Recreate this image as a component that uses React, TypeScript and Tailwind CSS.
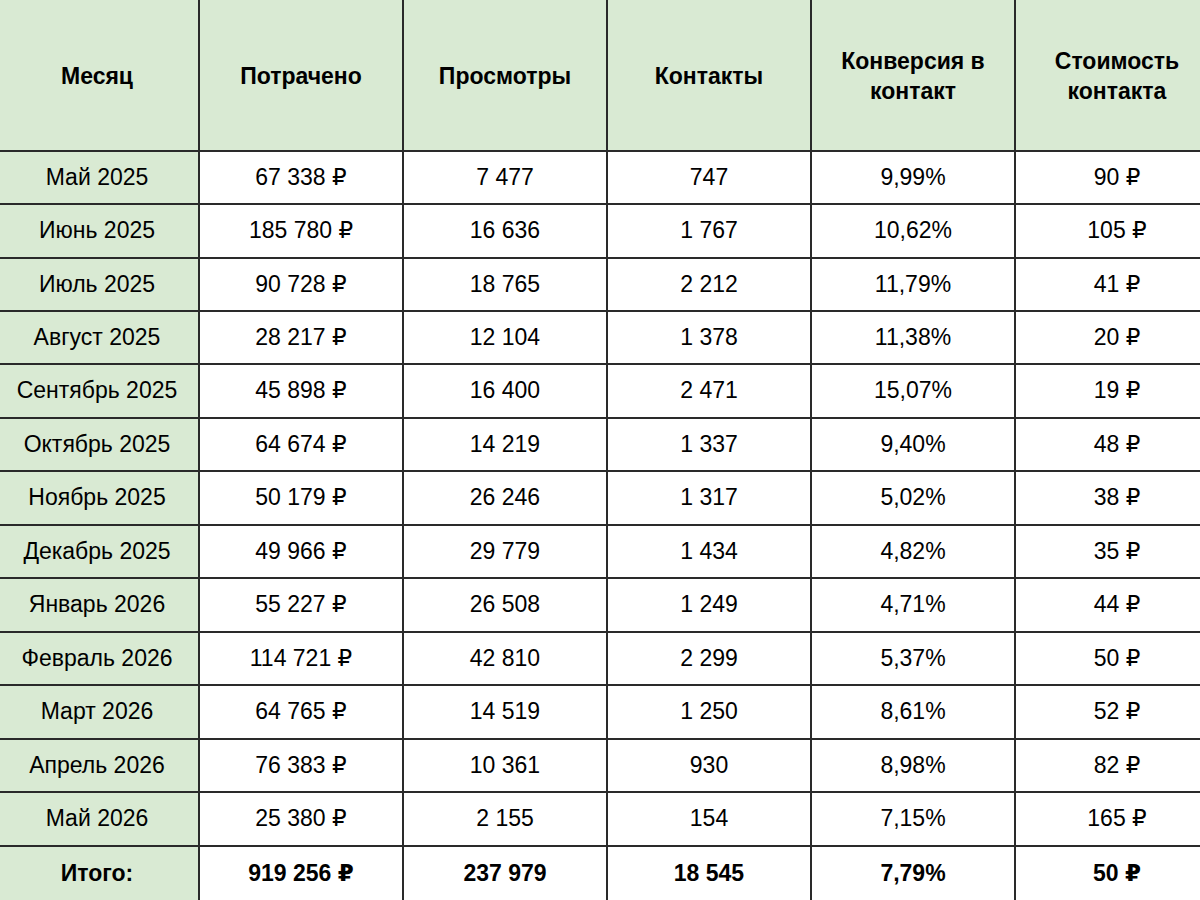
const HEADERS = [
  "Месяц",
  "Потрачено",
  "Просмотры",
  "Контакты",
  "Конверсия в контакт",
  "Стоимость контакта",
];

const ROWS: string[][] = [
  ["Май 2025", "67 338 ₽", "7 477", "747", "9,99%", "90 ₽"],
  ["Июнь 2025", "185 780 ₽", "16 636", "1 767", "10,62%", "105 ₽"],
  ["Июль 2025", "90 728 ₽", "18 765", "2 212", "11,79%", "41 ₽"],
  ["Август 2025", "28 217 ₽", "12 104", "1 378", "11,38%", "20 ₽"],
  ["Сентябрь 2025", "45 898 ₽", "16 400", "2 471", "15,07%", "19 ₽"],
  ["Октябрь 2025", "64 674 ₽", "14 219", "1 337", "9,40%", "48 ₽"],
  ["Ноябрь 2025", "50 179 ₽", "26 246", "1 317", "5,02%", "38 ₽"],
  ["Декабрь 2025", "49 966 ₽", "29 779", "1 434", "4,82%", "35 ₽"],
  ["Январь 2026", "55 227 ₽", "26 508", "1 249", "4,71%", "44 ₽"],
  ["Февраль 2026", "114 721 ₽", "42 810", "2 299", "5,37%", "50 ₽"],
  ["Март 2026", "64 765 ₽", "14 519", "1 250", "8,61%", "52 ₽"],
  ["Апрель 2026", "76 383 ₽", "10 361", "930", "8,98%", "82 ₽"],
  ["Май 2026", "25 380 ₽", "2 155", "154", "7,15%", "165 ₽"],
];

const TOTAL = ["Итого:", "919 256 ₽", "237 979", "18 545", "7,79%", "50 ₽"];

// row pitch in the sheet is ~53.4px, so mix 53 and 54
const TALL = [1, 4, 6, 8, 10, 12];

function Row({ cells, index, bold }: { cells: string[]; index: number; bold?: boolean }) {
  // last row runs past the bottom edge, like the cropped sheet
  const h = bold ? "h-[56px]" : TALL.includes(index) ? "h-[54px]" : "h-[53px]";
  return (
    <div className="flex">
      {cells.map((c, i) => (
        <div
          key={i}
          className={`${h} w-[204px] shrink-0 flex items-center justify-center border-r-2 border-b-2 border-[#2a2a2a] ${
            i === 0 ? "bg-[#d9ead3]" : "bg-white"
          } ${bold ? "font-bold pb-[1px]" : ""}`}
        >
          {c}
        </div>
      ))}
    </div>
  );
}

export default function App() {
  return (
    <div
      className="w-[1200px] h-[900px] overflow-hidden bg-white text-black text-[23px] leading-[1.3]"
      style={{ fontFamily: '"Liberation Sans", Arial, "DejaVu Sans", sans-serif' }}
    >
      <div className="-ml-[4px] w-[1224px]">
        {/* Header */}
        <div className="flex">
          {HEADERS.map((h) => (
            <div
              key={h}
              className="h-[152px] w-[204px] shrink-0 flex items-center justify-center px-6 pt-1 text-center font-bold bg-[#d9ead3] border-r-2 border-b-2 border-[#2a2a2a]"
            >
              {h}
            </div>
          ))}
        </div>

        {ROWS.map((r, i) => (
          <Row key={r[0]} cells={r} index={i} />
        ))}
        <Row cells={TOTAL} index={13} bold />
      </div>
    </div>
  );
}
